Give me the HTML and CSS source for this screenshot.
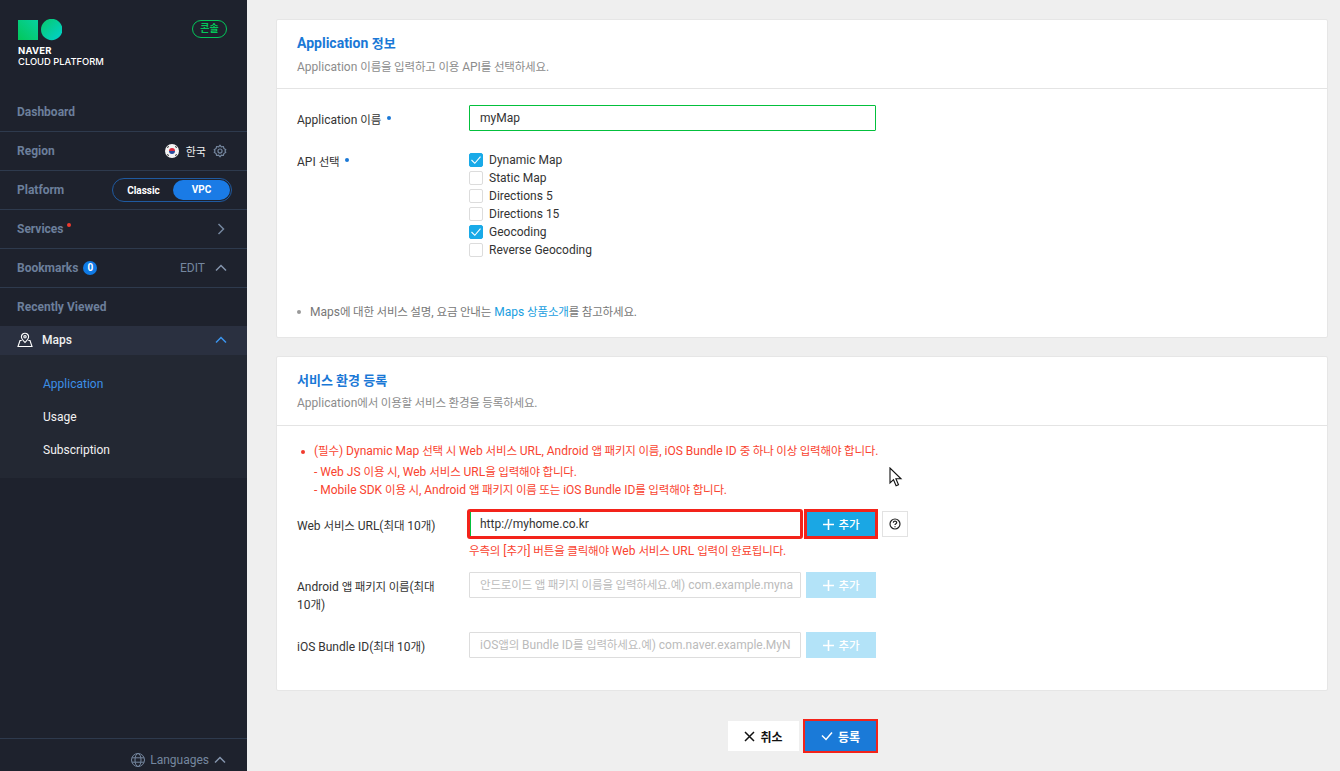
FILE: index.html
```html
<!DOCTYPE html>
<html lang="ko">
<head>
<meta charset="utf-8">
<title>Application 등록</title>
<link rel="stylesheet" href="styles.css">
</head>
<body>
<div class="app">
  <aside class="side">
    <div class="brand">
      <div class="brand-left">
        <div class="logo">
          <svg width="44" height="22" viewBox="0 0 44 22">
            <defs>
              <linearGradient id="g1" x1="0" y1="1" x2="1" y2="0"><stop offset="0" stop-color="#03c75a"/><stop offset="1" stop-color="#07d1a0"/></linearGradient>
              <linearGradient id="g2" x1="0" y1="0" x2="1" y2="1"><stop offset="0" stop-color="#08c96a"/><stop offset="1" stop-color="#00d2d0"/></linearGradient>
            </defs>
            <rect x="0" y="1" width="20" height="20" fill="url(#g1)"/>
            <circle cx="33.7" cy="10.5" r="10.7" fill="url(#g2)"/>
          </svg>
        </div>
        <div class="brand-t1">NAVER</div>
        <div class="brand-t2">CLOUD PLATFORM</div>
      </div>
      <span class="console">콘솔</span>
    </div>
    <div class="row"><span class="row-t">Dashboard</span></div>
    <div class="row"><span class="row-t">Region</span>
      <span class="row-r">
        <svg class="flag" width="14" height="14" viewBox="0 0 14 14"><circle cx="7" cy="7" r="7" fill="#f4f4f4"/><path d="M4 7a3 3 0 0 1 6 0z" fill="#d8283c"/><path d="M4 7a3 3 0 0 0 6 0z" fill="#2a4a9c"/><path d="M2 3.500l2 -1M10 2.500l2 1M2 10.500l2 1M10 11.500l2 -1" stroke="#333" stroke-width="1"/></svg>
        <span class="kr">한국</span>
        <svg class="gear" width="14" height="14" viewBox="0 0 24 24" fill="none" stroke="#75879f" stroke-width="2"><circle cx="12" cy="12" r="3.500"/><path d="M12 2l2.200 3 3.600-.7 1 3.500 3.200 1.900-1.600 2.300 1.600 2.300-3.200 1.900-1 3.500-3.600-.7L12 22l-2.200-3-3.600.7-1-3.500-3.200-1.900L3.600 12 2 9.700l3.200-1.900 1-3.500 3.600.7z" stroke-linejoin="round"/></svg>
      </span>
    </div>
    <div class="row"><span class="row-t">Platform</span>
      <span class="toggle"><span class="tg-a">Classic</span><span class="tg-b">VPC</span></span>
    </div>
    <div class="row"><span class="row-t">Services<i class="dot"></i></span>
      <svg class="chev" width="10" height="12" viewBox="0 0 10 12" fill="none" stroke="#75879f" stroke-width="1.500"><path d="M2.500 1l5 5-5 5"/></svg>
    </div>
    <div class="row"><span class="row-t">Bookmarks <b class="badge">0</b></span>
      <span class="row-r edit">EDIT
        <svg class="up" width="12" height="8" viewBox="0 0 12 8" fill="none" stroke="#8495ad" stroke-width="1.500"><path d="M1 6.500l5-5 5 5"/></svg>
      </span>
    </div>
    <div class="row last"><span class="row-t">Recently Viewed</span></div>
    <div class="maps">
      <span class="maps-l">
        <svg width="16" height="16" viewBox="0 0 16 16" fill="none" stroke="#fff" stroke-width="1.100"><path d="M8 1.200a3.600 3.600 0 0 1 3.600 3.600c0 2.200-2.200 4.200-3.600 5.600C6.600 9 4.400 7 4.400 4.800A3.600 3.600 0 0 1 8 1.200z"/><circle cx="8" cy="4.800" r="1.200"/><path d="M4.700 8.500H3L1 14.500h14l-2-6h-1.700"/></svg>
        Maps
      </span>
      <svg width="12" height="8" viewBox="0 0 12 8" fill="none" stroke="#3c94ee" stroke-width="1.500"><path d="M1 6.500l5-5 5 5"/></svg>
    </div>
    <nav class="sub">
      <a class="on">Application</a>
      <a>Usage</a>
      <a>Subscription</a>
    </nav>
    <div class="side-foot">
      <svg width="14" height="14" viewBox="0 0 14 14" fill="none" stroke="#75879f" stroke-width="1"><circle cx="7" cy="7" r="6.500"/><ellipse cx="7" cy="7" rx="3" ry="6.500"/><path d="M1 4.800h12M1 9.200h12"/></svg>
      <span>Languages</span>
      <svg width="12" height="8" viewBox="0 0 12 8" fill="none" stroke="#8495ad" stroke-width="1.500"><path d="M1 6.500l5-5 5 5"/></svg>
    </div>
  </aside>

  <main class="main">
    <section class="card card-a">
      <header class="card-h">
        <h2>Application <span class="h">정보</span></h2>
        <p>Application <span class="h">이름을 입력하고 이용</span> API<span class="h">를 선택하세요</span>.</p>
      </header>
      <div class="card-b">
        <div class="frow name-row">
          <label class="lab">Application <span class="h">이름</span> <i class="req"></i></label>
          <div class="input focus">myMap</div>
        </div>
        <div class="frow api-row">
          <label class="lab">API <span class="h">선택</span> <i class="req"></i></label>
          <ul class="checks">
            <li><span class="cb on"><svg width="14" height="14" viewBox="0 0 14 14" fill="none" stroke="#fff" stroke-width="1.100"><path d="M2.500 7l3.300 3.300 5.700-6.600"/></svg></span>Dynamic Map</li>
            <li><span class="cb"></span>Static Map</li>
            <li><span class="cb"></span>Directions 5</li>
            <li><span class="cb"></span>Directions 15</li>
            <li><span class="cb on"><svg width="14" height="14" viewBox="0 0 14 14" fill="none" stroke="#fff" stroke-width="1.100"><path d="M2.500 7l3.300 3.300 5.700-6.600"/></svg></span>Geocoding</li>
            <li><span class="cb"></span>Reverse Geocoding</li>
          </ul>
        </div>
        <p class="note"><i class="bul"></i>Maps<span class="h">에 대한 서비스 설명</span>, <span class="h">요금 안내는</span> <a>Maps <span class="h">상품소개</span></a><span class="h">를 참고하세요</span>.</p>
      </div>
    </section>

    <section class="card card-c">
      <header class="card-h">
        <h2 class="h-kr">서비스 환경 등록</h2>
        <p>Application<span class="h">에서 이용할 서비스 환경을 등록하세요</span>.</p>
      </header>
      <div class="card-b2">
        <div class="warn">
          <p class="w1"><i class="bul red"></i>(<span class="h">필수</span>) Dynamic Map <span class="h">선택 시</span> Web <span class="h">서비스</span> URL, Android <span class="h">앱 패키지 이름</span>, iOS Bundle ID <span class="h">중 하나 이상 입력해야 합니다</span>.</p>
          <p class="w2">- Web JS <span class="h">이용 시</span>, Web <span class="h">서비스</span> URL<span class="h">을 입력해야 합니다</span>.</p>
          <p class="w3">- Mobile SDK <span class="h">이용 시</span>, Android <span class="h">앱 패키지 이름 또는</span> iOS Bundle ID<span class="h">를 입력해야 합니다</span>.</p>
        </div>
        <div class="frow url-row">
          <label class="lab">Web <span class="h">서비스</span> URL(<span class="h">최대</span> 10<span class="h">개</span>)</label>
          <div class="col">
            <div class="ctl">
              <div class="input w-url hl">http://myhome.co.kr</div>
              <button class="add hl-btn"><svg class="plus" width="11" height="11" viewBox="0 0 11 11" fill="none" stroke="#fff" stroke-width="1.600"><path d="M5.500 0v11M0 5.500h11"/></svg><span class="h">추가</span></button>
              <span class="help"><svg width="12" height="12" viewBox="0 0 12 12" fill="none" stroke="#222" stroke-width="1.200"><circle cx="6" cy="6" r="5"/><path d="M4.300 4.700c0-2.200 3.400-2.200 3.400 0 0 1.100-1.700 1.200-1.700 2.400M6 8.200v1.100"/></svg></span>
            </div>
            <p class="hint"><span class="h">우측의</span> [<span class="h">추가</span>] <span class="h">버튼을 클릭해야</span> Web <span class="h">서비스</span> URL <span class="h">입력이 완료됩니다</span>.</p>
          </div>
        </div>
        <div class="frow and-row">
          <label class="lab">Android <span class="h">앱 패키지 이름</span>(<span class="h">최대</span> 10<span class="h">개</span>)</label>
          <div class="ctl">
            <div class="input w-url ph"><span class="h">안드로이드 앱 패키지 이름을 입력하세요</span>.<span class="h">예</span>) com.example.myna</div>
            <button class="add off"><svg class="plus" width="11" height="11" viewBox="0 0 11 11" fill="none" stroke="#fff" stroke-width="1.600"><path d="M5.500 0v11M0 5.500h11"/></svg><span class="h">추가</span></button>
          </div>
        </div>
        <div class="frow ios-row">
          <label class="lab">iOS Bundle ID(<span class="h">최대</span> 10<span class="h">개</span>)</label>
          <div class="ctl">
            <div class="input w-url ph">iOS<span class="h">앱의</span> Bundle ID<span class="h">를 입력하세요</span>.<span class="h">예</span>) com.naver.example.MyN</div>
            <button class="add off"><svg class="plus" width="11" height="11" viewBox="0 0 11 11" fill="none" stroke="#fff" stroke-width="1.600"><path d="M5.500 0v11M0 5.500h11"/></svg><span class="h">추가</span></button>
          </div>
        </div>
      </div>
    </section>

    <div class="actions">
      <button class="btn-x"><svg width="11" height="11" viewBox="0 0 11 11" fill="none" stroke="#111" stroke-width="1.500"><path d="M1 1l9 9M10 1l-9 9"/></svg>취소</button>
      <button class="btn-ok"><svg width="12" height="10" viewBox="0 0 12 10" fill="none" stroke="#fff" stroke-width="1.500"><path d="M1 4.500l4 4 6-7"/></svg>등록</button>
    </div>
  </main>
</div>
<svg class="cursor" width="14" height="20" viewBox="0 0 14 20"><path d="M1 1v15l3.500-3.300 2.600 6 2.400-1-2.600-5.900H12z" fill="#fff" stroke="#111" stroke-width="1.100"/></svg>
</body>
</html>
```
FILE: styles.css
```css
* { box-sizing: border-box; }
html, body { margin: 0; height: 771px; overflow: hidden; }
body { font-family: Roboto, "Noto Sans CJK KR", sans-serif; font-size: 12px; color: #333; background: #efefef; position: relative; }
p, h2, ul { margin: 0; padding: 0; }
i { font-style: normal; }
.h { font-size: 11.5px; letter-spacing: -0.18px; }
.app { display: flex; height: 771px; }

.side { width: 247px; flex: none; background: #1e222d; display: flex; flex-direction: column; height: 771px; }
.brand { height: 93px; padding: 19px 20px 0 18px; display: flex; justify-content: space-between; align-items: flex-start; }
.logo { height: 22px; }
.logo svg { display: block; }
.brand-t1 { margin-top: 4px; font: 700 9.5px/11px Inter, Roboto, sans-serif; color: #fff; letter-spacing: 0.2px; }
.brand-t2 { font: 500 9.4px/11px Inter, Roboto, sans-serif; color: #fff; }
.console { margin-top: 1px; width: 35px; height: 18px; border: 1px solid #03c75a; border-radius: 9px; color: #03c75a; font-size: 10px; font-weight: 700; line-height: 15px; text-align: center; }
.row { height: 39px; flex: none; padding: 0 17px; display: flex; align-items: center; justify-content: space-between; border-bottom: 1px solid #2e3a4d; }
.row.last { border-bottom: 0; height: 38px; }
.row-t { color: #6c7f9b; font-weight: 700; font-size: 12px; display: inline-flex; align-items: center; position: relative; }
.row-r { display: inline-flex; align-items: center; color: #fff; }
.flag { margin-right: 7px; }
.kr { font-size: 11px; margin-right: 7px; margin-bottom: 1px; color: #f0f0f0; }
.gear { margin-right: 3px; }
.dot { position: absolute; right: -7px; top: 1px; width: 4px; height: 4px; border-radius: 50%; background: #f03a2e; }
.toggle { margin-right: -2px; width: 120px; height: 24px; border: 1px solid #1f5aa0; border-radius: 12px; display: flex; align-items: center; color: #fff; font-weight: 700; font-size: 10px; padding: 1px; }
.tg-a { width: 60px; text-align: center; }
.tg-b { width: 58px; height: 20px; line-height: 20px; border-radius: 10px; background: #1a7be6; text-align: center; }
.chev { margin-right: 4px; }
.badge { display: inline-block; margin-left: 5px; width: 14px; height: 14px; border-radius: 50%; background: #0f7ae5; color: #fff; font-size: 10px; font-weight: 700; line-height: 14px; text-align: center; }
.edit { color: #75879f; font-size: 12px; gap: 10px; }
.up { margin-right: 3px; }
.maps { height: 29px; flex: none; background: #2a3040; padding: 0 20px 1px 17px; display: flex; justify-content: space-between; align-items: center; color: #f0f0f0; font-size: 12px; font-weight: 500; }
.maps-l { display: inline-flex; align-items: center; gap: 9px; }
.sub { background: #232833; height: 123px; flex: none; padding-top: 13px; display: flex; flex-direction: column; }
.sub a { height: 33px; flex: none; line-height: 33px; padding-left: 43px; color: #f2f2f2; font-size: 12px; }
.sub a.on { color: #3c8fe6; }
.side-foot { margin-top: auto; height: 33px; flex: none; border-top: 1px solid #2e3a4d; display: flex; justify-content: flex-end; align-items: center; gap: 5px; padding: 10px 21px 0 0; color: #75879f; font-size: 12px; }

.main { flex: 1; padding: 19px 12px 0 29px; min-width: 0; }
.card { background: #fff; border: 1px solid #e6e6e6; border-radius: 2px; }
.card-a { height: 319px; }
.card-c { height: 335px; margin-top: 18px; }
.card-h { height: 69px; padding: 14px 20px 0; border-bottom: 1px solid #e4e4e4; }
.card-h h2 { font-size: 14px; font-weight: 700; color: #1a78d6; line-height: 18px; }
.card-h h2 .h, .card-h h2.h-kr { font-size: 13px; letter-spacing: 0; }
.card-h h2.h-kr { padding-top: 1px; margin-bottom: -1px; }
.card-h p { margin-top: 6px; font-size: 12px; line-height: 16px; color: #8c8c8c; }
.card-b { padding: 16px 20px 0; }
.frow { display: flex; align-items: flex-start; }
.lab { width: 172px; flex: none; font-size: 12px; color: #333; line-height: 18px; position: relative; }
.req { display: inline-block; width: 4px; height: 4px; border-radius: 50%; background: #1a78d6; vertical-align: 4px; margin-left: 3px; }
.name-row .lab { padding-top: 6px; }
.api-row { margin-top: 20px; height: 153px; }
.api-row .lab { margin-top: 2px; }
.input { height: 26px; border: 1px solid #ddd; background: #fff; border-radius: 1px; padding: 0 10px; font-size: 12px; line-height: 24px; color: #333; white-space: nowrap; }
.input.focus { width: 407px; border-color: #03c03c; }
.checks { list-style: none; }
.checks li { height: 18px; display: flex; align-items: center; font-size: 12px; color: #333; }
.cb { width: 14px; height: 14px; border: 1px solid #dcdcdc; border-radius: 2px; margin-right: 6px; display: block; background: #fff; }
.cb svg { display: block; }
.cb.on { background: #19aae8; border-color: #19aae8; }
.cb.on svg { margin: -1px; }
.note { font-size: 12px; color: #777; line-height: 16px; position: relative; padding-left: 13px; }
.note a { color: #1a9ee0; }
.bul { position: absolute; left: 0; top: 6px; width: 4px; height: 4px; border-radius: 50%; background: #999; }
.bul.red { background: #f03a2e; left: 4px; top: 7px; }
.card-b2 { padding: 17px 20px 0; }
.warn { color: #f9432f; font-size: 12px; }
.w1 { position: relative; padding-left: 17px; line-height: 16px; }
.w2 { padding-left: 17px; margin-top: 5px; line-height: 16px; }
.w3 { padding-left: 17px; line-height: 16px; margin-top: 2px; }
.url-row { margin-top: 13px; }
.url-row .lab { padding-top: 6px; }
.ctl { display: flex; align-items: flex-start; gap: 5px; }
.w-url { width: 332px; }
.input.hl { outline: 3px solid #f3231a; outline-offset: -1px; box-shadow: inset 1px 0 0 #03c03c; }
.input.ph { color: #bbb; }
.add { width: 70px; height: 26px; border: 0; background: #1aa7e4; color: #fff; font: 500 12px Roboto, "Noto Sans CJK KR", sans-serif; display: flex; align-items: center; justify-content: center; padding: 0; }
.plus { margin-right: 5px; }
.add.hl-btn { outline: 3px solid #f3231a; outline-offset: -1px; }
.add.off { background: #b3e3f8; }
.help { width: 26px; height: 26px; border: 1px solid #e2e2e2; background: #fff; display: flex; align-items: center; justify-content: center; margin-left: 1px; }
.hint { color: #f9432f; font-size: 12px; line-height: 16px; margin-top: 6px; }
.and-row { margin-top: 13px; }
.and-row .lab { padding-right: 25px; padding-top: 6px; }
.ios-row { margin-top: 18px; }
.ios-row .lab { padding-top: 6px; }
.actions { margin-top: 30px; display: flex; justify-content: center; gap: 6px; }
.btn-x, .btn-ok { width: 71px; height: 30px; border: 0; padding: 0; display: flex; align-items: center; justify-content: center; gap: 5px; font: 700 12px Roboto, "Noto Sans CJK KR", sans-serif; }
.btn-x { background: #fff; color: #111; }
.btn-ok { background: #1a7ad8; color: #fff; outline: 2px solid #f3231a; }
.cursor { position: absolute; left: 889px; top: 467px; }
```
